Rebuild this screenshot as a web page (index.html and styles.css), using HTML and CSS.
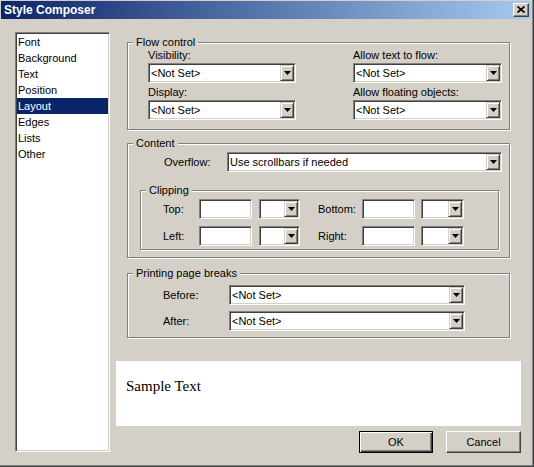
FILE: index.html
```html
<!DOCTYPE html>
<html>
<head>
<meta charset="utf-8">
<title>Style Composer</title>
<link rel="stylesheet" href="styles.css">
</head>
<body>
<div class="window">
  <div class="titlebar">
    <span class="title">Style Composer</span>
    <span class="close"><svg width="8" height="7" viewBox="0 0 8 7"><path d="M0.5 0.5 L7.5 6.5 M7.5 0.5 L0.5 6.5" stroke="#000" stroke-width="1.7" fill="none"/></svg></span>
  </div>
  <div class="content">
    <ul class="list">
      <li>Font</li>
      <li>Background</li>
      <li>Text</li>
      <li>Position</li>
      <li class="selected">Layout</li>
      <li>Edges</li>
      <li>Lists</li>
      <li>Other</li>
    </ul>
    <div class="main">
      <div class="group flow">
        <span class="legend">Flow control</span>
        <div class="cols">
          <div class="col">
            <div class="lbl">Visibility:</div>
            <div class="combo"><span class="val">&lt;Not Set&gt;</span><span class="btn"><svg width="7" height="4" viewBox="0 0 7 4"><polygon points="0,0 7,0 3.5,4" fill="#000"/></svg></span></div>
            <div class="lbl second">Display:</div>
            <div class="combo"><span class="val">&lt;Not Set&gt;</span><span class="btn"><svg width="7" height="4" viewBox="0 0 7 4"><polygon points="0,0 7,0 3.5,4" fill="#000"/></svg></span></div>
          </div>
          <div class="col">
            <div class="lbl">Allow text to flow:</div>
            <div class="combo"><span class="val">&lt;Not Set&gt;</span><span class="btn"><svg width="7" height="4" viewBox="0 0 7 4"><polygon points="0,0 7,0 3.5,4" fill="#000"/></svg></span></div>
            <div class="lbl second">Allow floating objects:</div>
            <div class="combo"><span class="val">&lt;Not Set&gt;</span><span class="btn"><svg width="7" height="4" viewBox="0 0 7 4"><polygon points="0,0 7,0 3.5,4" fill="#000"/></svg></span></div>
          </div>
        </div>
      </div>

      <div class="group contentgrp">
        <span class="legend">Content</span>
        <div class="ovrow">
          <span class="ovlbl">Overflow:</span>
          <div class="combo ovcombo"><span class="val">Use scrollbars if needed</span><span class="btn"><svg width="7" height="4" viewBox="0 0 7 4"><polygon points="0,0 7,0 3.5,4" fill="#000"/></svg></span></div>
        </div>
        <div class="group clipping">
          <span class="legend">Clipping</span>
          <div class="cliprow">
            <span class="clbl1">Top:</span>
            <span class="textbox"></span>
            <div class="combo small1"><span class="val"></span><span class="btn"><svg width="7" height="4" viewBox="0 0 7 4"><polygon points="0,0 7,0 3.5,4" fill="#000"/></svg></span></div>
            <span class="clbl2">Bottom:</span>
            <span class="textbox"></span>
            <div class="combo small2"><span class="val"></span><span class="btn"><svg width="7" height="4" viewBox="0 0 7 4"><polygon points="0,0 7,0 3.5,4" fill="#000"/></svg></span></div>
          </div>
          <div class="cliprow">
            <span class="clbl1">Left:</span>
            <span class="textbox"></span>
            <div class="combo small1"><span class="val"></span><span class="btn"><svg width="7" height="4" viewBox="0 0 7 4"><polygon points="0,0 7,0 3.5,4" fill="#000"/></svg></span></div>
            <span class="clbl2">Right:</span>
            <span class="textbox"></span>
            <div class="combo small2"><span class="val"></span><span class="btn"><svg width="7" height="4" viewBox="0 0 7 4"><polygon points="0,0 7,0 3.5,4" fill="#000"/></svg></span></div>
          </div>
        </div>
      </div>

      <div class="group printing">
        <span class="legend">Printing page breaks</span>
        <div class="prow">
          <span class="plbl">Before:</span>
          <div class="combo pcombo"><span class="val">&lt;Not Set&gt;</span><span class="btn"><svg width="7" height="4" viewBox="0 0 7 4"><polygon points="0,0 7,0 3.5,4" fill="#000"/></svg></span></div>
        </div>
        <div class="prow">
          <span class="plbl">After:</span>
          <div class="combo pcombo"><span class="val">&lt;Not Set&gt;</span><span class="btn"><svg width="7" height="4" viewBox="0 0 7 4"><polygon points="0,0 7,0 3.5,4" fill="#000"/></svg></span></div>
        </div>
      </div>

      <div class="sample">Sample Text</div>

      <div class="buttons">
        <button class="pbtn default">OK</button>
        <button class="pbtn cancel">Cancel</button>
      </div>
    </div>
  </div>
</div>
</body>
</html>
```

FILE: styles.css
```css
* { box-sizing: border-box; }
html, body { margin: 0; padding: 0; }
body {
  width: 534px;
  height: 467px;
  overflow: hidden;
  background: #d4d0c8;
  font-family: "Liberation Sans", Arial, sans-serif;
  font-size: 11px;
  color: #000;
}
.window {
  width: 534px;
  height: 467px;
  background: #d4d0c8;
  border-right: 1px solid #404040;
  border-bottom: 1px solid #404040;
  box-shadow: inset -1px -1px 0 #808080;
  padding: 1px 0 0 1px;
  display: flex;
  flex-direction: column;
}
.titlebar {
  height: 18px;
  margin-right: 2px;
  background: linear-gradient(to right, #0a246a, #a6caf0);
  display: flex;
  align-items: center;
  justify-content: space-between;
  padding: 0 2px 0 3px;
}
.title {
  color: #fff;
  font-weight: bold;
  font-size: 12px;
  line-height: 14px;
}
.close {
  width: 16px;
  height: 14px;
  background: #d4d0c8;
  border: 1px solid;
  border-color: #fff #404040 #404040 #fff;
  box-shadow: inset -1px -1px 0 #808080;
  display: flex;
  align-items: center;
  justify-content: center;
  padding-bottom: 1px;
}
.close svg { display: block; }
.content {
  display: flex;
  padding: 13px 0 0 14px;
}
.list {
  width: 95px;
  height: 420px;
  margin: 0;
  padding: 1px;
  list-style: none;
  background: #fff;
  border: 1px solid;
  border-color: #808080 #fff #fff #808080;
  box-shadow: inset 1px 1px 0 #404040, inset -1px -1px 0 #d4d0c8;
}
.list li {
  height: 16px;
  line-height: 16px;
  padding-left: 1px;
}
.list li.selected {
  background: #0a246a;
  color: #fff;
}
.main {
  width: 405px;
  margin-left: 6px;
  padding-top: 10px;
  display: flex;
  flex-direction: column;
}
.group {
  position: relative;
  border: 1px solid #808080;
  box-shadow: inset 1px 1px 0 #fff, 1px 1px 0 #fff;
  margin: 0 11px;
}
.legend {
  position: absolute;
  top: -7px;
  left: 5px;
  padding: 0 3px 0 3px;
  line-height: 13px;
  background: #d4d0c8;
}
.flow { padding: 6px 0 9px 20px; }
.cols {
  display: grid;
  grid-template-columns: 148px 149px;
  column-gap: 57px;
}
.lbl { line-height: 13px; margin-bottom: 1px; white-space: nowrap; }
.lbl.second { margin-top: 3px; }
.combo {
  height: 20px;
  display: flex;
  background: #fff;
  border: 1px solid;
  border-color: #808080 #fff #fff #808080;
  box-shadow: inset 1px 1px 0 #404040, inset -1px -1px 0 #d4d0c8;
  padding: 1px;
}
.combo .val {
  flex: 1;
  line-height: 16px;
  padding-left: 1px;
  white-space: nowrap;
  overflow: hidden;
}
.combo .btn {
  width: 14px;
  height: 16px;
  background: #d4d0c8;
  border: 1px solid;
  border-color: #d4d0c8 #404040 #404040 #d4d0c8;
  box-shadow: inset 1px 1px 0 #fff, inset -1px -1px 0 #808080;
  display: flex;
  align-items: center;
  justify-content: center;
}
.combo .btn svg { display: block; }
.contentgrp {
  margin-top: 13px;
  padding: 8px 0 7px 0;
}
.ovrow {
  display: flex;
  align-items: center;
  height: 20px;
  padding-left: 36px;
}
.ovlbl { width: 63px; }
.ovcombo { width: 275px; }
.clipping {
  margin: 18px 10px 0 12px;
  padding: 8px 0 3px 22px;
}
.cliprow {
  display: flex;
  align-items: center;
  height: 20px;
}
.cliprow + .cliprow { margin-top: 7px; }
.clbl1 { width: 36px; }
.clbl2 { width: 44px; margin-left: 18px; }
.textbox {
  width: 53px;
  height: 20px;
  background: #fff;
  border: 1px solid;
  border-color: #808080 #fff #fff #808080;
  box-shadow: inset 1px 1px 0 #404040, inset -1px -1px 0 #d4d0c8;
}
.small1 { width: 41px; margin-left: 7px; }
.small2 { width: 43px; margin-left: 6px; }
.printing {
  margin-top: 15px;
  padding: 11px 0 6px 35px;
}
.prow {
  display: flex;
  align-items: center;
  height: 20px;
}
.prow + .prow { margin-top: 6px; }
.plbl { width: 66px; }
.pcombo { width: 236px; }
.sample {
  margin-top: 23px;
  height: 65px;
  background: #fff;
  padding: 16px 0 0 10px;
  font-family: "Liberation Serif", "Times New Roman", serif;
  font-size: 15px;
  line-height: 18px;
}
.buttons {
  margin-top: 5px;
  display: flex;
  justify-content: flex-end;
  gap: 13px;
}
.pbtn {
  height: 22px;
  margin: 0;
  padding: 0;
  font-family: "Liberation Sans", Arial, sans-serif;
  font-size: 11px;
  color: #000;
  background: #d4d0c8;
  border: 1px solid;
  border-color: #fff #404040 #404040 #fff;
  box-shadow: inset -1px -1px 0 #808080;
  border-radius: 0;
}
.pbtn.default {
  width: 74px;
  border-color: #000;
  box-shadow: inset 1px 1px 0 #fff, inset -1px -1px 0 #404040, inset -2px -2px 0 #808080;
}
.pbtn.cancel { width: 75px; }
```
